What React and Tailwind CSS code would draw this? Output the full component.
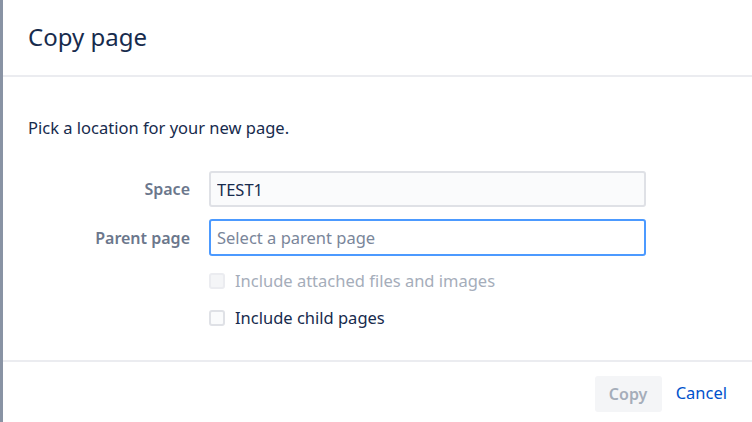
import React, { useState } from "react";

export default function App() {
  const [includeChildren, setIncludeChildren] = useState(false);

  return (
    <div
      className="flex h-[422px] w-[752px] overflow-hidden bg-[#8993a4]"
      style={{ fontFamily: '"Noto Sans", "Open Sans", sans-serif' }}
    >
      {/* sliver of the page behind the overlay */}
      <div className="w-[3px] shrink-0" />

      {/* DIALOG */}
      <div className="flex flex-1 flex-col bg-white">
        {/* HEADER */}
        <div className="flex h-[77px] shrink-0 items-center border-b-2 border-[#ebecf0] pl-[25px]">
          <h1 className="pb-[2px] text-[24px] text-[#172b4d]">Copy page</h1>
        </div>

        {/* BODY */}
        <div className="flex-1 pl-[25px] pt-[39px]">
          <p className="text-[16.5px] leading-[24px] text-[#172b4d]">
            Pick a location for your new page.
          </p>

          <div className="mt-[31px] grid grid-cols-[162px_437px] items-center gap-x-[19px] gap-y-[12px]">
            <label className="text-right text-[16px] font-semibold text-[#6b778c]">
              Space
            </label>
            <input
              readOnly
              value="TEST1"
              className="h-[36px] rounded-[3px] border-2 border-[#dfe1e6] bg-[#fafbfc] px-[6px] text-[16.5px] text-[#172b4d] outline-none"
            />

            <label className="text-right text-[16px] font-semibold text-[#6b778c]">
              Parent page
            </label>
            <input
              placeholder="Select a parent page"
              className="h-[37px] rounded-[3px] border-2 border-[#4c9aff] bg-white px-[6px] text-[16.5px] text-[#172b4d] outline-none placeholder:text-[#7a869a]"
            />
          </div>

          <div className="ml-[181px] mt-[13px] flex flex-col gap-[13px]">
            <label className="flex items-center gap-[10px] text-[16.5px] leading-[24px] text-[#a5adba]">
              <span className="h-[16px] w-[16px] rounded-[3px] border-2 border-[#ebecf0] bg-[#f4f5f7]" />
              Include attached files and images
            </label>
            <label
              className="flex cursor-pointer items-center gap-[10px] text-[16.5px] leading-[24px] text-[#172b4d]"
              onClick={() => setIncludeChildren(!includeChildren)}
            >
              <span
                className={`h-[16px] w-[16px] rounded-[3px] border-2 ${
                  includeChildren
                    ? "border-[#0052cc] bg-[#0052cc]"
                    : "border-[#dfe1e6] bg-[#fafbfc]"
                }`}
              />
              Include child pages
            </label>
          </div>
        </div>

        {/* FOOTER */}
        <div className="flex h-[62px] shrink-0 items-center justify-end gap-[14px] border-t-2 border-[#ebecf0] pr-[25px] pt-[3px]">
          <button
            disabled
            className="h-[36px] w-[67px] rounded-[3px] bg-[#f4f5f7] text-[16px] font-semibold text-[#a5adba]"
          >
            Copy
          </button>
          <button className="text-[16.5px] text-[#0052cc]">Cancel</button>
        </div>
      </div>
    </div>
  );
}
